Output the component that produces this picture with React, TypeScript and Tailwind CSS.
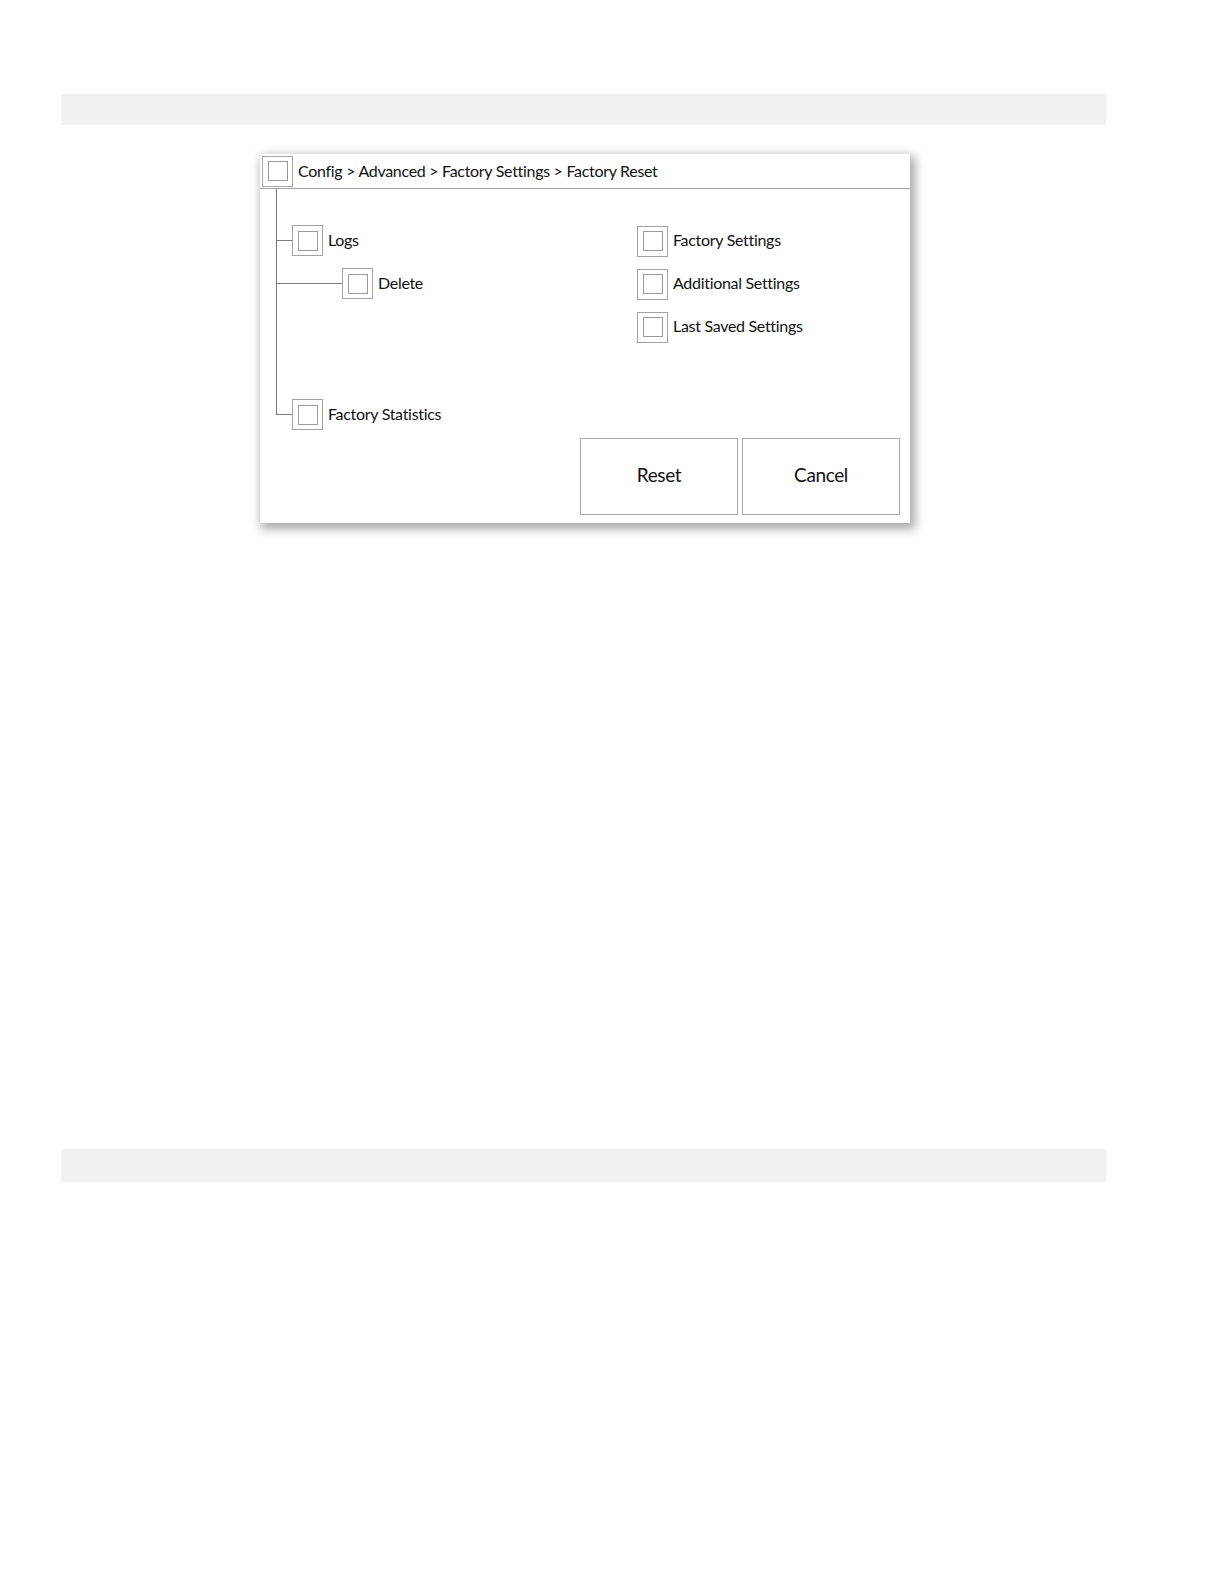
import React from "react";

function Box() {
  return (
    <div className="w-[31px] h-[31px] shrink-0 border border-[#a3a3a3] flex items-center justify-center bg-white">
      <div className="w-[20px] h-[20px] border border-[#9a9a9a]" />
    </div>
  );
}

function Label({ children }: { children: React.ReactNode }) {
  return (
    <span className="ml-[5px] pb-[2px] text-[16px] leading-none text-[#111111] tracking-[-0.3px] whitespace-nowrap">
      {children}
    </span>
  );
}

export default function App() {
  return (
    <div
      className="w-[1224px] h-[1584px] bg-white flex flex-col"
      style={{ fontFamily: "Lato, 'Open Sans', sans-serif" }}
    >
      <div className="mt-[94px] ml-[61px] w-[1045px] h-[31px] bg-[#f1f1f1]" />

      <div className="mt-[29px] ml-[260px] w-[650px] h-[369px] bg-white flex flex-col shadow-[3px_4px_10px_2px_rgba(0,0,0,0.35)]">
        {/* header */}
        <div className="h-[35px] shrink-0 border-b border-[#a0a0a0] flex items-center pl-[2px]">
          <Box />
          <span className="ml-[5px] pb-[1px] text-[16px] leading-none text-[#111111] tracking-[-0.3px] whitespace-nowrap">
            Config &gt; Advanced &gt; Factory Settings &gt; Factory Reset
          </span>
        </div>

        {/* body */}
        <div className="flex">
          {/* tree */}
          <div className="w-[377px] pl-[16px] flex flex-col">
            <div className="border-l border-[#7a7a7a] pt-[36px] pb-[100px] flex flex-col gap-[12px]">
              <div className="flex items-center h-[31px]">
                <div className="w-[15px] h-px bg-[#7a7a7a]" />
                <Box />
                <Label>Logs</Label>
              </div>
              <div className="flex items-center h-[31px]">
                <div className="w-[65px] h-px bg-[#7a7a7a]" />
                <Box />
                <Label>Delete</Label>
              </div>
            </div>
            <div className="flex items-start">
              <div className="w-[16px] h-[16px] border-l border-b border-[#7a7a7a]" />
              <div className="flex items-center">
                <Box />
                <Label>Factory Statistics</Label>
              </div>
            </div>
          </div>

          {/* right options */}
          <div className="pt-[37px] flex flex-col gap-[13px]">
            {["Factory Settings", "Additional Settings", "Last Saved Settings"].map((t) => (
              <div key={t} className="flex items-center h-[30px]">
                <Box />
                <Label>{t}</Label>
              </div>
            ))}
          </div>
        </div>

        {/* buttons */}
        <div className="mt-auto mb-[8px] pr-[10px] flex justify-end gap-[4px]">
          <button className="w-[158px] h-[77px] pb-[3px] border border-[#a8a8a8] bg-white text-[19px] text-[#111111] tracking-[-0.4px]">
            Reset
          </button>
          <button className="w-[158px] h-[77px] pb-[3px] border border-[#a8a8a8] bg-white text-[19px] text-[#111111] tracking-[-0.4px]">
            Cancel
          </button>
        </div>
      </div>

      <div className="mt-[626px] ml-[61px] w-[1045px] h-[33px] bg-[#f1f1f1]" />
    </div>
  );
}
